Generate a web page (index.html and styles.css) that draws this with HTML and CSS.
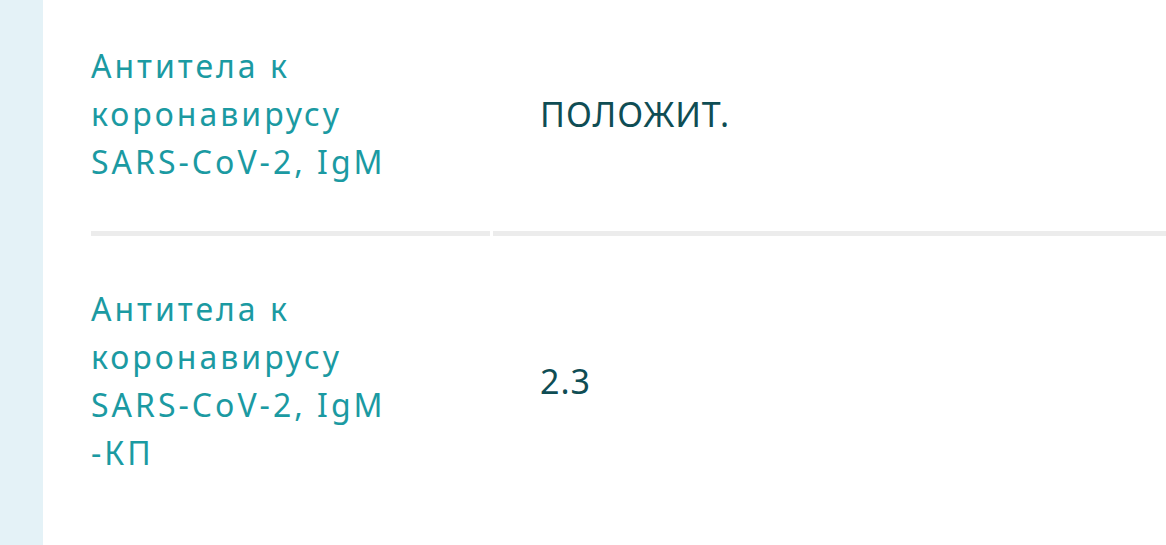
FILE: index.html
```html
<!DOCTYPE html>
<html lang="ru">
<head>
<meta charset="utf-8">
<link rel="stylesheet" href="styles.css">
</head>
<body>
<div class="page">
  <aside class="strip"></aside>
  <main class="content">
    <div class="row first">
      <div class="cell label"><span class="label-text">Антитела к коронавирусу <span class="nb">SARS-CoV-2,</span> IgM</span></div>
      <div class="cell value">ПОЛОЖИТ.</div>
    </div>
    <div class="row last">
      <div class="cell label"><span class="label-text">Антитела к коронавирусу <span class="nb">SARS-CoV-2,</span> IgM -КП</span></div>
      <div class="cell value">2.3</div>
    </div>
  </main>
</div>
</body>
</html>
```
FILE: styles.css
```css
html, body {
  margin: 0;
  padding: 0;
  background: #ffffff;
}
body {
  font-family: "Noto Sans", "Open Sans", sans-serif;
  overflow: hidden;
}
.page {
  display: flex;
  width: 1166px;
  height: 545px;
}
.strip {
  width: 43px;
  flex: none;
  background: #e4f2f7;
}
.content {
  flex: 1;
  padding-left: 48px;
}
.row {
  display: flex;
  gap: 3px;
}
.cell {
  display: flex;
  align-items: center;
  border-bottom: 5px solid #ececec;
}
.first .cell {
  padding-top: 42px;
  padding-bottom: 45px;
}
.last .cell {
  padding-top: 49px;
  padding-bottom: 48px;
  border-bottom-color: transparent;
}
.label {
  width: 399px;
  flex: none;
}
.label-text {
  display: block;
  width: 310px;
  font-size: 32px;
  line-height: 48px;
  letter-spacing: 3px;
  color: #1b9aa2;
}
.nb {
  white-space: nowrap;
}
.value {
  flex: 1;
  padding-left: 47px;
  font-size: 34px;
  letter-spacing: 1px;
  color: #0f4d54;
}
```
